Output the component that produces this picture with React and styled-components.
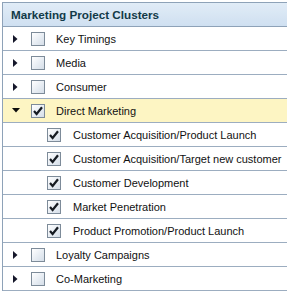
import React from "react";
import styled, { createGlobalStyle } from "styled-components";

const Global = createGlobalStyle`
  html, body { margin: 0; padding: 0; background: #ffffff; }
  body { font-family: "Liberation Sans", Arial, sans-serif; }
`;

const Panel = styled.div`
  margin: 2px 0 0 2px;
  border-left: 1px solid #8ea2b8;
  border-top: 1px solid #8ea2b8;
  width: 285px;
`;

const Header = styled.div`
  height: 23px;
  display: flex;
  align-items: center;
  padding-left: 8px;
  border-bottom: 1px solid #8ea2b8;
  background-color: #cfe0f1;
  background-image:
    radial-gradient(rgba(255,255,255,0.35) 0.6px, transparent 0.8px),
    linear-gradient(#dbe8f5, #c6daee);
  background-size: 2px 2px, 100% 100%;
  font-weight: bold;
  font-size: 11.7px;
  color: #123a48;
`;

const Row = styled.div`
  height: 23px;
  display: flex;
  align-items: center;
  border-bottom: 1px solid #9cadc0;
  background: ${(p) => (p.$active ? "#fdf5c3" : "#ffffff")};
  padding-left: ${(p) => (p.$child ? "44px" : "7px")};
  font-size: 11px;
  color: #111;
`;

const Toggle = styled.div`
  width: 11px;
  height: 10px;
  display: flex;
  align-items: center;
  justify-content: center;
  margin-right: 10px;
`;

const Box = styled.div`
  width: 12px;
  height: 12px;
  border: 1px solid #7d8b99;
  background: linear-gradient(135deg, #ffffff 0%, #e9eef4 50%, #d5dee8 100%);
  display: flex;
  align-items: center;
  justify-content: center;
  margin-right: ${(p) => (p.$child ? "12px" : "11px")};
  flex: none;
`;

const Label = styled.span`
  white-space: nowrap;
`;

const RightArrow = () => (
  <svg width="5" height="8" viewBox="0 0 5 8">
    <path d="M0 0 L4.5 4 L0 8 Z" fill="#15172a" />
  </svg>
);

const DownArrow = () => (
  <svg width="8" height="5" viewBox="0 0 8 5">
    <path d="M0 0 L8 0 L4 4.5 Z" fill="#0d0d0d" />
  </svg>
);

const Check = () => (
  <svg width="10" height="10" viewBox="0 0 10 10">
    <path d="M1 5 L3.6 8 L9 1.2" fill="none" stroke="#161b22" strokeWidth="2.2" />
  </svg>
);

const items = [
  { label: "Key Timings" },
  { label: "Media" },
  { label: "Consumer" },
  {
    label: "Direct Marketing",
    open: true,
    checked: true,
    children: [
      "Customer Acquisition/Product Launch",
      "Customer Acquisition/Target new customer",
      "Customer Development",
      "Market Penetration",
      "Product Promotion/Product Launch",
    ],
  },
  { label: "Loyalty Campaigns" },
  { label: "Co-Marketing" },
];

export default function App() {
  return (
    <>
      <Global />
      <Panel>
        <Header>Marketing Project Clusters</Header>
        {items.map((it) => (
          <React.Fragment key={it.label}>
            <Row $active={it.open}>
              <Toggle>{it.open ? <DownArrow /> : <RightArrow />}</Toggle>
              <Box>{it.checked && <Check />}</Box>
              <Label>{it.label}</Label>
            </Row>
            {it.open &&
              it.children.map((c) => (
                <Row key={c} $child>
                  <Box $child>
                    <Check />
                  </Box>
                  <Label>{c}</Label>
                </Row>
              ))}
          </React.Fragment>
        ))}
      </Panel>
    </>
  );
}
